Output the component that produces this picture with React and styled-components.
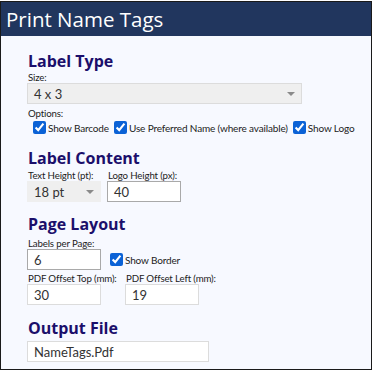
import React from "react";
import styled, { createGlobalStyle } from "styled-components";

const Global = createGlobalStyle`
  html, body { margin: 0; padding: 0; background: #ffffff; }
  body { font-family: "Lato", "Open Sans", sans-serif; }
  * { box-sizing: border-box; }
`;

const Frame = styled.div`
  margin-top: 1px;
  width: 372px;
  height: 369px;
  border: 1px solid #1a1a1a;
  background: #f7f9ff;
  display: flex;
  flex-direction: column;
`;

const Header = styled.div`
  height: 34px;
  background: #21365e;
  color: #ffffff;
  font-family: "Open Sans", sans-serif;
  font-size: 20.5px;
  line-height: 34px;
  padding-left: 5px;
  flex-shrink: 0;
`;

const Body = styled.div`
  padding: 15px 0 0 26px;
  display: flex;
  flex-direction: column;
`;

const Section = styled.section`
  display: flex;
  flex-direction: column;
  margin-bottom: ${(p) => p.$gap ?? 0}px;
`;

const Heading = styled.h2`
  margin: 0 0 0 1px;
  font-family: "Open Sans", sans-serif;
  font-size: 16px;
  font-weight: 700;
  line-height: 20px;
  color: #1b0f6b;
`;

const Label = styled.div`
  font-size: 9.7px;
  letter-spacing: -0.15px;
  line-height: 12px;
  color: #222;
  margin-left: 1px;
  margin-top: ${(p) => p.$top ?? 0}px;
  white-space: nowrap;
`;

const SelectBox = styled.div`
  width: ${(p) => p.$w}px;
  height: 21px;
  background: #efefef;
  border: 1px solid ${(p) => (p.$plain ? "#efefef" : "#dcdcdc")};
  display: flex;
  align-items: center;
  justify-content: space-between;
  padding: 0 6px 0 6px;
  font-size: 13px;
  color: #333;
`;

const Arrow = styled.span`
  width: 0;
  height: 0;
  border-left: 4px solid transparent;
  border-right: 4px solid transparent;
  border-top: 4px solid #8a8a8a;
`;

const Options = styled.div`
  display: flex;
  align-items: center;
  gap: 5px;
  padding-left: 6px;
  margin-top: 2px;
`;

const Check = styled.label`
  display: flex;
  align-items: center;
  gap: 2px;
  font-size: 10px;
  letter-spacing: -0.15px;
  color: #222;
  white-space: nowrap;
`;

const Box = styled.input`
  margin: 0;
  width: 13px;
  height: 13px;
  accent-color: #0b62d6;
`;

const Row = styled.div`
  display: flex;
  align-items: ${(p) => p.$align || "flex-start"};
  gap: ${(p) => p.$gap ?? 6}px;
  margin-top: ${(p) => p.$top ?? 0}px;
`;

const Field = styled.div`
  display: flex;
  flex-direction: column;
  flex: none;
  min-width: 0;
  width: ${(p) => (p.$w ? `${p.$w}px` : "auto")};
`;

const TextInput = styled.div`
  width: ${(p) => p.$w}px;
  height: 21px;
  background: #fff;
  border: 1px solid ${(p) => (p.$dark ? "#a9a9a9" : "#dcdcdc")};
  padding-left: 6px;
  display: flex;
  align-items: center;
  font-size: 13px;
  color: #333;
  margin-top: ${(p) => p.$top ?? 0}px;
`;

function CheckItem({ children }) {
  return (
    <Check>
      <Box type="checkbox" defaultChecked />
      {children}
    </Check>
  );
}

export default function App() {
  return (
    <>
      <Global />
      <Frame>
        <Header>Print Name Tags</Header>
        <Body>
          <Section $gap={14}>
            <Heading>Label Type</Heading>
            <Label>Size:</Label>
            <SelectBox $w={275}>
              <span>4 x 3</span>
              <Arrow />
            </SelectBox>
            <Label $top={3}>Options:</Label>
            <Options>
              <CheckItem>Show Barcode</CheckItem>
              <CheckItem>Use Preferred Name (where available)</CheckItem>
              <CheckItem>Show Logo</CheckItem>
            </Options>
          </Section>
          <Section $gap={12}>
            <Heading>Label Content</Heading>
            <Row $gap={0} $top={1}>
              <Field $w={80}>
                <Label>Text Height (pt):</Label>
                <SelectBox $w={74} $plain>
                  <span>18 pt</span>
                  <Arrow />
                </SelectBox>
              </Field>
              <Field>
                <Label>Logo Height (px):</Label>
                <TextInput $w={74} $dark>40</TextInput>
              </Field>
            </Row>
          </Section>
          <Section $gap={13}>
            <Heading>Page Layout</Heading>
            <Label $top={3}>Labels per Page:</Label>
            <Row $gap={9} $align="center">
              <TextInput $w={74} $dark>6</TextInput>
              <CheckItem>Show Border</CheckItem>
            </Row>
            <Row $gap={0} $top={2}>
              <Field $w={98}>
                <Label>PDF Offset Top (mm):</Label>
                <TextInput $w={74}>30</TextInput>
              </Field>
              <Field>
                <Label>PDF Offset Left (mm):</Label>
                <TextInput $w={74}>19</TextInput>
              </Field>
            </Row>
          </Section>
          <Section>
            <Heading>Output File</Heading>
            <TextInput $w={182} $top={3}>NameTags.Pdf</TextInput>
          </Section>
        </Body>
      </Frame>
    </>
  );
}
